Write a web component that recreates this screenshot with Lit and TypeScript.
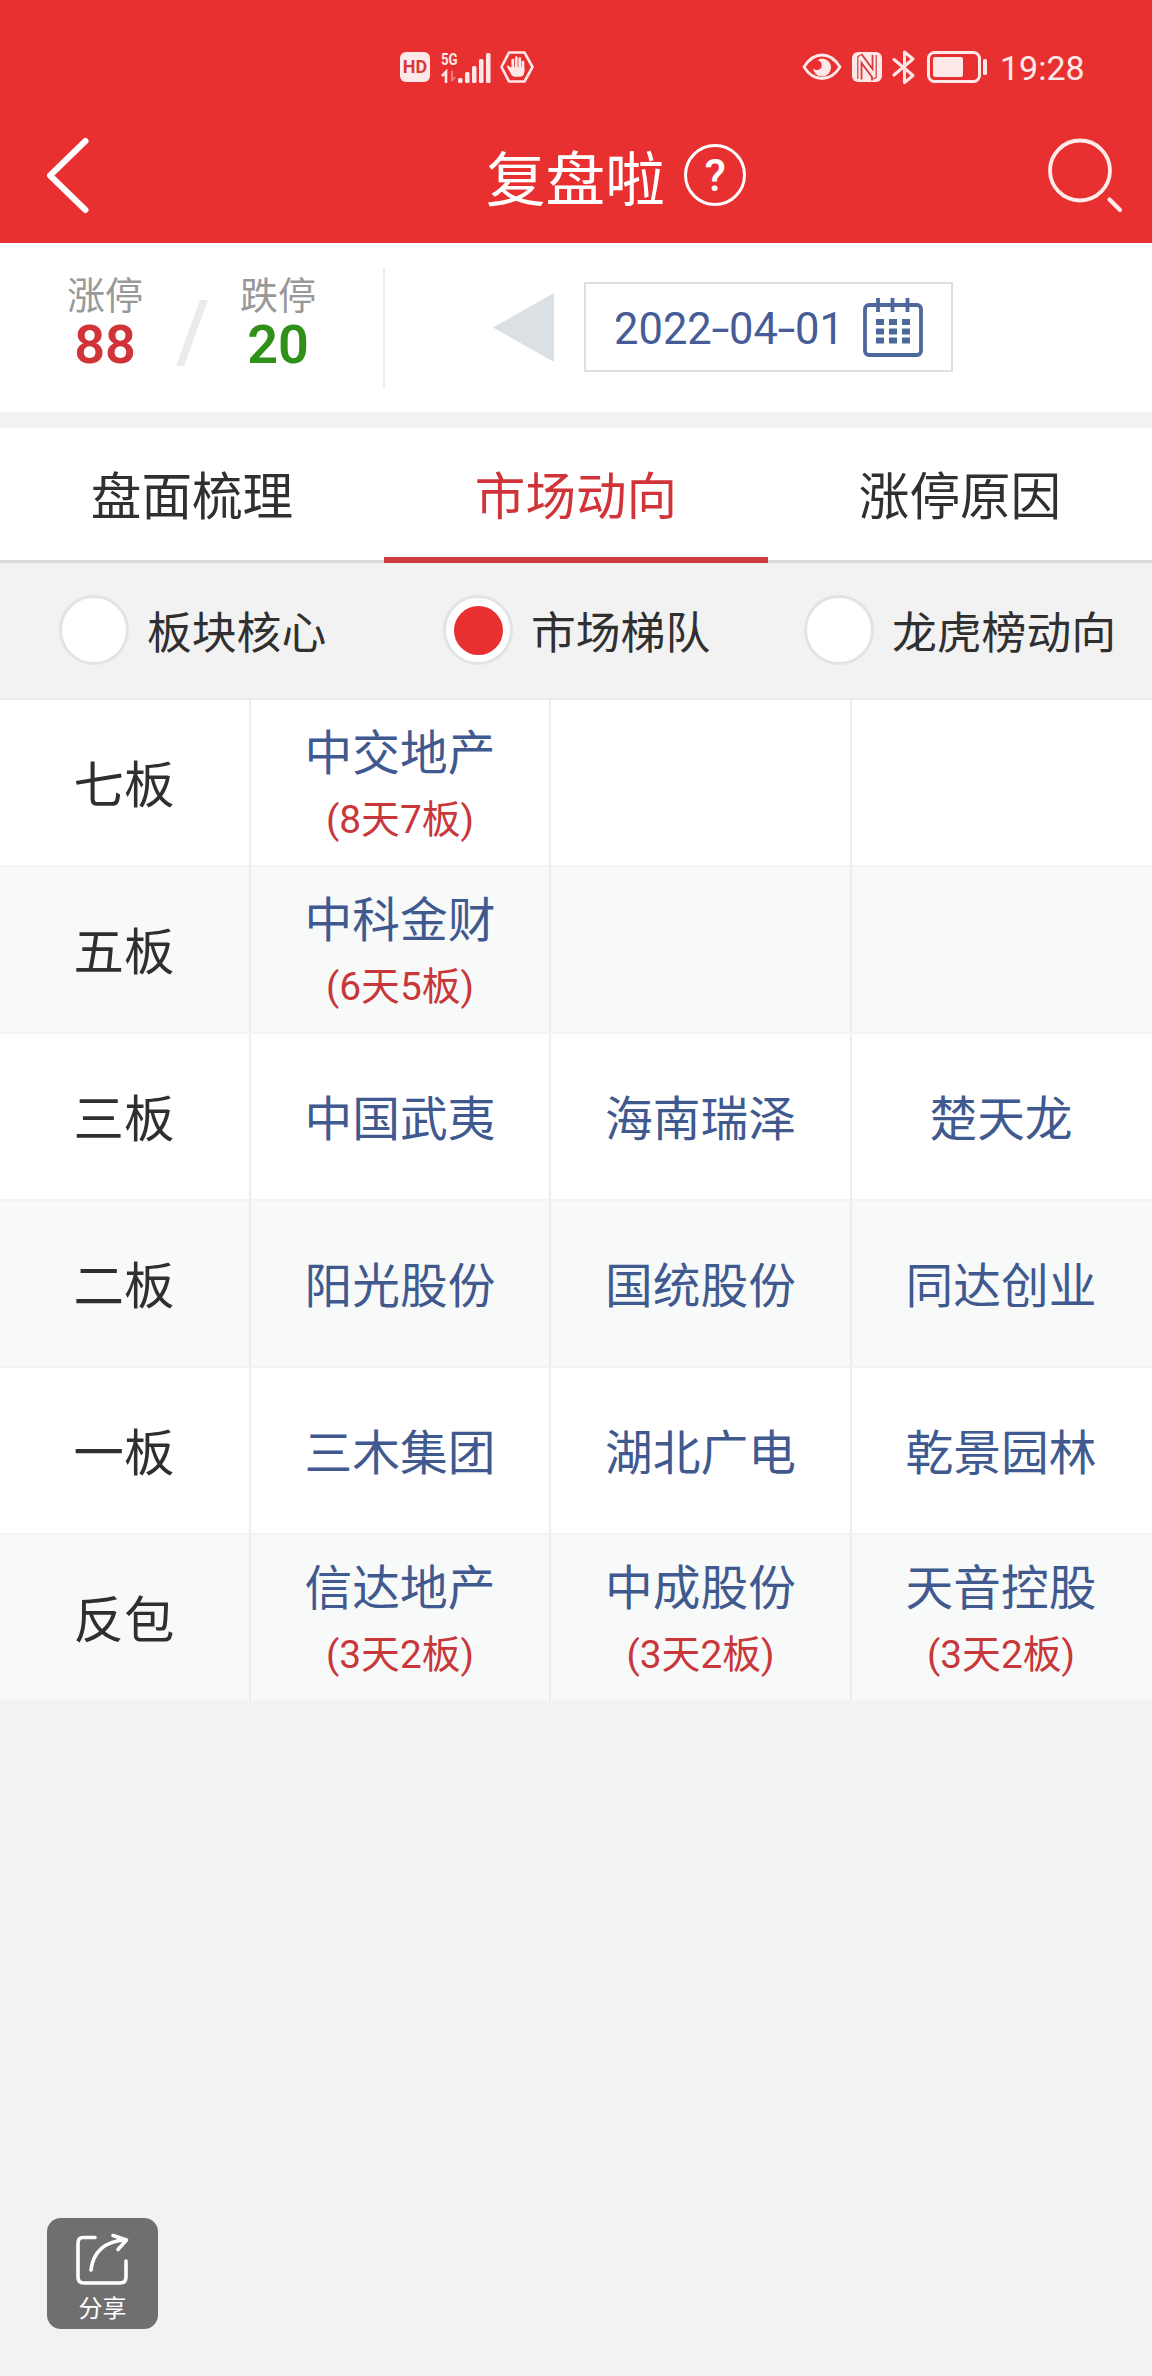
import { LitElement, html, css, nothing } from "lit";
import { customElement, property, state } from "lit/decorators.js";
import { classMap } from "lit/directives/class-map.js";

interface Stock {
  name: string;
  note?: string;
}

interface LadderRow {
  label: string;
  stocks: Stock[];
}

const ROWS: LadderRow[] = [
  { label: "七板", stocks: [{ name: "中交地产", note: "(8天7板)" }] },
  { label: "五板", stocks: [{ name: "中科金财", note: "(6天5板)" }] },
  { label: "三板", stocks: [{ name: "中国武夷" }, { name: "海南瑞泽" }, { name: "楚天龙" }] },
  { label: "二板", stocks: [{ name: "阳光股份" }, { name: "国统股份" }, { name: "同达创业" }] },
  { label: "一板", stocks: [{ name: "三木集团" }, { name: "湖北广电" }, { name: "乾景园林" }] },
  {
    label: "反包",
    stocks: [
      { name: "信达地产", note: "(3天2板)" },
      { name: "中成股份", note: "(3天2板)" },
      { name: "天音控股", note: "(3天2板)" },
    ],
  },
];

@customElement("status-bar")
class StatusBar extends LitElement {
  static styles = css`
    :host {
      display: flex;
      justify-content: space-between;
      height: 100px;
      padding: 0 69px 0 400px;
      box-sizing: border-box;
      color: #ffe9e8;
    }
    svg {
      display: block;
    }
    .group {
      display: flex;
      height: 34px;
      margin-top: 50px;
      align-items: center;
    }
    .hd {
      display: flex;
      align-items: center;
      justify-content: center;
      width: 30px;
      height: 30px;
      border-radius: 6px;
      background: #ffe9e8;
      color: #d8393b;
      font-size: 18px;
      font-weight: 700;
      line-height: 30px;
    }
    .signal {
      display: grid;
      grid-template-columns: 17px 33px;
      margin-left: 11px;
      width: 50px;
      height: 32px;
    }
    .net {
      font-size: 17px;
      font-weight: 700;
      line-height: 16px;
      height: 17px;
      transform: scaleX(0.78);
      transform-origin: left;
    }
    .hand {
      margin-left: 8px;
    }
    .nfc {
      margin-left: 10px;
    }
    .bt {
      margin-left: 10px;
    }
    .battery {
      margin-left: 12px;
    }
    .time {
      width: 83px;
      margin-left: 12px;
      font-size: 34px;
      line-height: 34px;
      white-space: nowrap;
      padding-top: 2px;
    }
  `;

  render() {
    return html`
      <div class="group">
        <div class="hd">HD</div>
        <div class="signal">
          <div>
            <div class="net">5G</div>
            <svg width="17" height="15" viewBox="0 0 17 15" fill="none" stroke="currentColor">
              <path d="M1 8l4-4v11" stroke-width="2.6" />
              <path d="M11 3v10M11 13l3-4" stroke-width="2" opacity=".4" />
            </svg>
          </div>
          <svg width="33" height="32" viewBox="0 0 33 32" fill="currentColor">
            <rect x="0" y="27" width="4.500" height="5" rx="1.5" />
            <rect x="7" y="21" width="4.500" height="11" rx="1.5" />
            <rect x="14" y="15" width="4.500" height="17" rx="1.5" />
            <rect x="21" y="8" width="4.500" height="24" rx="1.5" />
            <rect x="28" y="2" width="4.500" height="30" rx="1.5" />
          </svg>
        </div>
        <svg class="hand" width="36" height="34" viewBox="0 0 36 34" fill="none" stroke="currentColor" stroke-linecap="round">
          <path d="M10 2.500h15.500L33.500 17l-8 14.500H10L2.500 17z" stroke-width="2.600" stroke-linejoin="round" />
          <path d="M13.800 10v10M17.300 7.500v12M20.800 8.500v12M24 12v9" stroke-width="2.700" />
          <path d="M12.400 18L9.300 15.600c-1-.500-1.700.500-1.200 1.400l4 7.200c1 1.900 2.600 2.600 5.300 2.600h2.600c3.600 0 5.300-2 5.300-5.600V17H12.400z" fill="currentColor" stroke="none" />
        </svg>
      </div>
      <div class="group">
        <svg width="40" height="28" viewBox="0 0 40 28">
          <path d="M2 14C7 6 13 2 20 2s13 4 18 12c-5 8-11 11.500-18 11.500S7 22 2 14z" fill="none" stroke="currentColor" stroke-width="2.800" stroke-linejoin="round" />
          <path d="M20 5.500a9 9 0 1 1-9 9.500c2 3.500 8.500 2.500 8.700-2 .1-3.500-2-5.500-4-5.700A9 9 0 0 1 20 5.500z" fill="currentColor" />
        </svg>
        <svg class="nfc" width="30" height="30" viewBox="0 0 30 30">
          <rect width="30" height="30" rx="6" fill="currentColor" />
          <path d="M9.500 27.500V11L20 25V28.500M9.500 2L20.500 17V3" fill="none" stroke="#d8393b" stroke-width="1.800" />
          <path d="M5.800 27V4.500L9 3M24.200 3V25.500L21 27" fill="none" stroke="#d8393b" stroke-width="1.200" />
        </svg>
        <svg class="bt" width="23" height="34" viewBox="0 0 23 34" fill="none" stroke="currentColor" stroke-width="3" stroke-linejoin="round" stroke-linecap="round">
          <path d="M2 9.500l19 16-8.500 7V2L21 9 2 25" />
        </svg>
        <svg class="battery" width="61" height="34" viewBox="0 0 61 34">
          <rect x="1.500" y="2.500" width="51" height="29" rx="6" fill="none" stroke="currentColor" stroke-width="3" />
          <rect x="6" y="7" width="30" height="20" rx="2" fill="currentColor" />
          <rect x="56" y="9" width="4" height="16" rx="1.500" fill="currentColor" />
        </svg>
        <div class="time">19:28</div>
      </div>
    `;
  }
}

@customElement("title-bar")
class TitleBar extends LitElement {
  static styles = css`
    :host {
      display: grid;
      grid-template-columns: 484px 1fr 104px;
      height: 143px;
      color: #fff;
    }
    svg {
      display: block;
    }
    .back {
      padding: 36px 0 0 44px;
    }
    .title {
      display: flex;
      align-items: flex-start;
      padding-left: 2px;
      font-size: 59.600px;
      line-height: 70px;
    }
    .name {
      padding-top: 46px;
    }
    .help {
      display: flex;
      align-items: center;
      justify-content: center;
      width: 62px;
      height: 62px;
      margin: 44px 0 0 19px;
      padding: 2px 0 0 1px;
      border: 3.500px solid #fff;
      border-radius: 50%;
      box-sizing: border-box;
      font-size: 44px;
      font-weight: 500;
      line-height: 52px;
    }
    .search {
      padding-top: 36px;
    }
  `;

  render() {
    return html`
      <div class="back">
        <svg width="48" height="80" viewBox="0 0 48 80" fill="none" stroke="#fff" stroke-width="6" stroke-linecap="round" stroke-linejoin="round">
          <path d="M41.500 5L6 39.500 41.500 74" />
        </svg>
      </div>
      <div class="title"><span class="name">复盘啦</span><span class="help">?</span></div>
      <div class="search">
        <svg width="80" height="80" viewBox="0 0 80 80" fill="none" stroke="#ffebea" stroke-width="3.800" stroke-linecap="round">
          <circle cx="32" cy="34.500" r="30" />
          <path d="M61.500 63.500L72 74" stroke-width="4.200" />
        </svg>
      </div>
    `;
  }
}

@customElement("day-summary")
class DaySummary extends LitElement {
  static styles = css`
    :host {
      display: grid;
      grid-template-columns: 385px 1fr;
      height: 169px;
      background: #fff;
    }
    svg {
      display: block;
    }
    .counts {
      display: flex;
      justify-content: space-between;
      height: 119px;
      margin-top: 25px;
      padding: 0 66px;
      box-sizing: border-box;
      border-right: 2px solid #ebebeb;
    }
    .count {
      display: flex;
      flex-direction: column;
      align-items: center;
      width: 78px;
      padding-top: 3px;
      box-sizing: border-box;
      color: #999;
      font-size: 38px;
      line-height: 50px;
    }
    .value {
      margin-top: -3px;
      font-size: 54px;
      font-weight: 600;
      line-height: 54px;
    }
    .up {
      color: #d13438;
    }
    .down {
      color: #2f911a;
    }
    .slash {
      margin-top: 32px;
    }
    .picker {
      display: flex;
      align-items: center;
      height: 90px;
      margin: 39px 0 0 108px;
    }
    .date {
      display: flex;
      align-items: center;
      width: 369px;
      height: 90px;
      margin-left: 30px;
      padding-left: 28px;
      box-sizing: border-box;
      border: 2px solid #dedfe0;
      color: #455c96;
      font-size: 43.500px;
      line-height: 50px;
    }
    .digits {
      display: flex;
      width: 230px;
      padding-top: 5px;
    }
    .dash {
      display: flex;
      justify-content: center;
      width: 21.500px;
      transform: scaleX(1.500);
    }
    .calendar {
      margin-left: 19px;
    }
  `;

  @property() up = "88";
  @property() down = "20";
  @property() date = "2022-04-01";

  render() {
    const parts = this.date.split("-");
    return html`
      <div class="counts">
        <div class="count"><span>涨停</span><span class="value up">${this.up}</span></div>
        <svg class="slash" width="32" height="66" viewBox="0 0 32 66"><path d="M24 0h8L8 66H0z" fill="#ebebeb" /></svg>
        <div class="count"><span>跌停</span><span class="value down">${this.down}</span></div>
      </div>
      <div class="picker">
        <svg width="61" height="72" viewBox="0 0 61 72"><path d="M61 2v69L0 36.500z" fill="#dae0e3" /></svg>
        <div class="date">
          <div class="digits">
            ${parts.map((p, i) => html`${i ? html`<span class="dash">-</span>` : nothing}<span>${p}</span>`)}
          </div>
          <svg class="calendar" width="60" height="60" viewBox="0 0 60 60" fill="none" stroke="#4d689c" stroke-width="3.800">
            <rect x="2" y="8" width="56" height="50" rx="4" />
            <path d="M15 1v14M29.500 1v14M44.500 1v14" />
            <path d="M13 25h34M13 34.500h34M13 43.500h34" stroke-width="6" stroke-dasharray="8 5" />
          </svg>
        </div>
      </div>
    `;
  }
}

@customElement("ladder-table")
class LadderTable extends LitElement {
  static styles = css`
    :host {
      display: block;
      background: #fff;
    }
    .row {
      display: grid;
      grid-template-columns: 251px 300px 301px 300px;
      height: 167px;
      border-bottom: 2px solid #f2f3f3;
      box-sizing: border-box;
    }
    .row:nth-child(even) {
      background: #f8faf9;
    }
    .cell {
      display: flex;
      flex-direction: column;
      align-items: center;
      justify-content: center;
      border-right: 2px solid #ebeced;
      box-sizing: border-box;
      color: #40598f;
    }
    .cell:last-child {
      border-right: 0;
      padding-right: 2px;
    }
    .label {
      color: #2f2f2f;
      font-size: 50.400px;
      line-height: 60px;
      padding: 7px 1px 0 0;
    }
    .name {
      font-size: 47.700px;
      line-height: 66px;
      padding-top: 6px;
    }
    .noted .name {
      padding-top: 8px;
    }
    .note {
      font-size: 38.800px;
      line-height: 66px;
      color: #c8373a;
    }
  `;

  @property({ attribute: false }) rows: LadderRow[] = [];

  render() {
    return this.rows.map(
      (row) => html`
        <div class="row">
          <div class="cell label">${row.label}</div>
          ${[0, 1, 2].map((i) => {
            const s = row.stocks[i];
            return html`<div class=${classMap({ cell: true, noted: !!s?.note })}>
              ${s ? html`<div class="name">${s.name}</div>` : nothing}
              ${s?.note ? html`<div class="note">${s.note}</div>` : nothing}
            </div>`;
          })}
        </div>
      `
    );
  }
}

@customElement("app-root")
class AppRoot extends LitElement {
  static styles = css`
    :host {
      display: block;
      position: relative;
      width: 1152px;
      height: 2376px;
      overflow: hidden;
      background: #f2f2f2;
      font-family: Roboto, "Noto Sans CJK SC", sans-serif;
    }
    .header {
      height: 243px;
      background: #e83030;
    }
    .tabs {
      display: grid;
      grid-template-columns: repeat(3, 384px);
      height: 135px;
      margin-top: 16px;
      background: #fff;
    }
    .tab {
      display: flex;
      align-items: center;
      justify-content: center;
      border-bottom: 3px solid #dadada;
      box-sizing: border-box;
      color: #303030;
      font-size: 50.600px;
      line-height: 60px;
      padding-top: 8px;
    }
    .active {
      border-bottom: 6px solid #ce3b3d;
      padding-top: 11px;
      color: #d13438;
    }
    .filters {
      display: grid;
      grid-template-columns: 384px 361px 1fr;
      height: 137px;
      padding-left: 59px;
      border-bottom: 2px solid #ebebeb;
      box-sizing: border-box;
    }
    .filter {
      display: flex;
      align-items: center;
      gap: 18px;
      height: 134px;
      color: #303030;
      font-size: 44.800px;
      line-height: 60px;
      white-space: nowrap;
    }
    .filter span {
      padding-top: 8px;
    }
    .radio {
      display: flex;
      align-items: center;
      justify-content: center;
      flex: none;
      width: 70px;
      height: 70px;
      border: 3px solid #e2e3e5;
      border-radius: 50%;
      box-sizing: border-box;
      background: #fff;
    }
    .dot {
      width: 49px;
      height: 49px;
      border-radius: 50%;
      background: #e83030;
    }
    .share {
      position: absolute;
      left: 47px;
      bottom: 47px;
      display: flex;
      flex-direction: column;
      align-items: center;
      width: 111px;
      height: 111px;
      padding-top: 14px;
      box-sizing: border-box;
      border-radius: 14px;
      background: #6f6f6f;
      color: #fff;
      font-size: 24px;
      line-height: 30px;
    }
    .share-icon {
      display: block;
      margin-bottom: 6px;
    }
  `;

  @state() private tab = "市场动向";
  @state() private filter = "市场梯队";

  render() {
    return html`
      <div class="header">
        <status-bar></status-bar>
        <title-bar></title-bar>
      </div>
      <day-summary></day-summary>
      <div class="tabs">
        ${["盘面梳理", "市场动向", "涨停原因"].map(
          (t) => html`<div class=${classMap({ tab: true, active: t === this.tab })} @click=${() => (this.tab = t)}>${t}</div>`
        )}
      </div>
      <div class="filters">
        ${["板块核心", "市场梯队", "龙虎榜动向"].map(
          (f) => html`<div class="filter" @click=${() => (this.filter = f)}>
            <div class="radio">${f === this.filter ? html`<div class="dot"></div>` : nothing}</div>
            <span>${f}</span>
          </div>`
        )}
      </div>
      <ladder-table .rows=${ROWS}></ladder-table>
      <div class="share">
        <svg class="share-icon" width="56" height="56" viewBox="0 0 56 56" fill="none" stroke="#fff" stroke-width="3.600" stroke-linecap="round" stroke-linejoin="round">
          <path d="M20 5.500H8Q3 5.500 3 11.500V45Q3 51 9 51H45Q51 51 51 45V29" />
          <path d="M16 38C18 20 30 9 50 8" />
          <path d="M38 3.500L51.500 8 43 17.500" />
        </svg>
        <span>分享</span>
      </div>
    `;
  }
}
